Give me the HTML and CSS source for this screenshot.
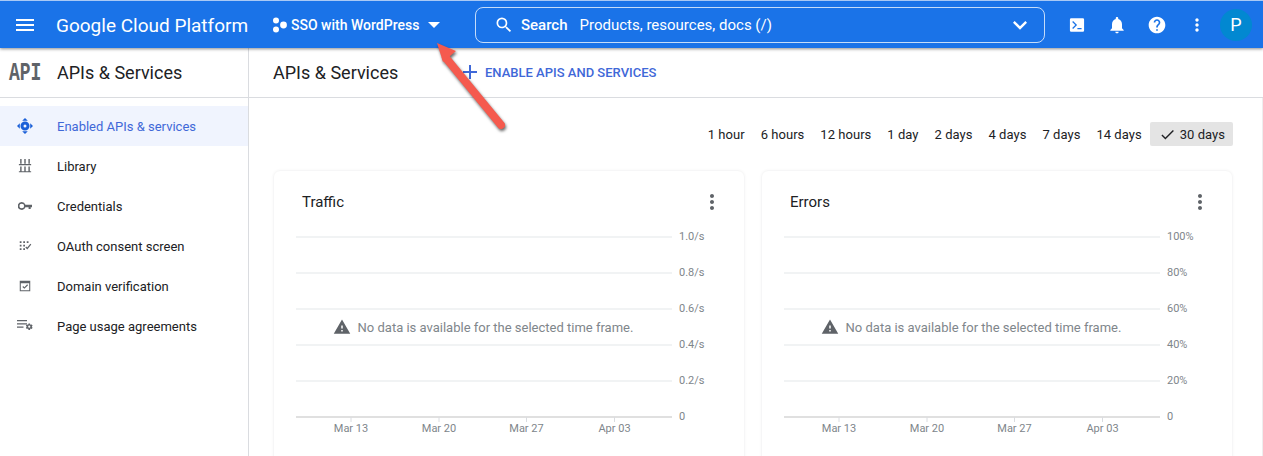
FILE: index.html
```html
<!DOCTYPE html>
<html lang="en">
<head>
    <meta charset="UTF-8">
    <meta name="viewport" content="width=device-width, initial-scale=1.0">
    <title>APIs &amp; Services</title>
    <link rel="stylesheet" href="styles.css">
</head>
<body>

    <header class="topbar">
        <svg class="menu-icon" viewBox="0 0 24 24"><path d="M3 18h18v-2H3v2zm0-5h18v-2H3v2zm0-7v2h18V6H3z"/></svg>
        <div class="logo">Google Cloud Platform</div>
        <div class="project">
            <svg class="project-icon" viewBox="0 0 16 16"><circle cx="4" cy="3.5" r="3"/><circle cx="4" cy="12.5" r="3"/><circle cx="11.5" cy="8" r="3.4"/></svg>
            <span class="project-name">SSO with WordPress</span>
            <svg class="project-caret" viewBox="0 0 12 6"><path d="M0 0h12L6 6z"/></svg>
        </div>
        <div class="search">
            <svg class="search-icon" viewBox="0 0 24 24"><path d="M15.5 14h-.79l-.28-.27A6.471 6.471 0 0 0 16 9.5 6.5 6.5 0 1 0 9.5 16c1.61 0 3.09-.59 4.23-1.57l.27.28v.79l5 4.99L20.49 19l-4.99-5zm-6 0C7.01 14 5 11.99 5 9.5S7.01 5 9.5 5 14 7.01 14 9.5 11.99 14 9.5 14z"/></svg>
            <span class="search-label">Search</span>
            <span class="search-hint">Products, resources, docs (/)</span>
            <svg class="search-more" viewBox="0 0 24 24"><path d="M16.59 8.59L12 13.17 7.41 8.59 6 10l6 6 6-6z"/></svg>
        </div>
        <div class="actions">
            <span class="action"><svg viewBox="0 0 24 24"><path fill-rule="evenodd" d="M5 4h14a1.500 1.500 0 0 1 1.500 1.500v13A1.500 1.500 0 0 1 19 20H5a1.500 1.500 0 0 1-1.500-1.500v-13A1.500 1.500 0 0 1 5 4zm1.200 4.300L9.900 12l-3.700 3.700 1.100 1.100 4.800-4.800-4.800-4.800zM12.500 15.500v1.500h5v-1.500z"/></svg></span>
            <span class="action"><svg viewBox="0 0 24 24"><path d="M12 22c1.100 0 2-.9 2-2h-4c0 1.100.9 2 2 2zm6-6v-5c0-3.070-1.630-5.640-4.500-6.320V4c0-.83-.67-1.500-1.500-1.500s-1.500.67-1.500 1.500v.68C7.640 5.360 6 7.920 6 11v5l-2 2v1h16v-1l-2-2z"/></svg></span>
            <span class="action"><svg viewBox="0 0 24 24"><path d="M12 2C6.480 2 2 6.480 2 12s4.480 10 10 10 10-4.480 10-10S17.520 2 12 2zm1 17h-2v-2h2v2zm2.070-7.750l-.9.920C13.450 12.900 13 13.500 13 15h-2v-.5c0-1.100.45-2.100 1.170-2.830l1.240-1.260c.37-.36.59-.86.59-1.410 0-1.100-.9-2-2-2s-2 .9-2 2H8c0-2.210 1.790-4 4-4s4 1.790 4 4c0 .88-.36 1.680-.93 2.250z"/></svg></span>
            <span class="action action-narrow"><svg viewBox="0 0 24 24"><path d="M12 8c1.100 0 2-.9 2-2s-.9-2-2-2-2 .9-2 2 .9 2 2 2zm0 2c-1.100 0-2 .9-2 2s.9 2 2 2 2-.9 2-2-.9-2-2-2zm0 6c-1.100 0-2 .9-2 2s.9 2 2 2 2-.9 2-2-.9-2-2-2z"/></svg></span>
            <span class="avatar">P</span>
        </div>
    </header>

    <div class="layout">
        <aside class="sidebar">
            <div class="sidebar-head">
                <span class="api-mark"><span>API</span></span>
                <span class="sidebar-title">APIs &amp; Services</span>
            </div>
            <nav class="nav">
                <a class="nav-item active">
                    <svg class="nav-icon" viewBox="0 0 16 16"><path d="M8 0l2.800 2.800H5.200zM8 16l-2.800-2.800h5.600zM0 8l2.800-2.800v5.600zM16 8l-2.800 2.800V5.200z"/><path fill-rule="evenodd" d="M8 3.500A4.500 4.500 0 1 1 8 12.500 4.500 4.500 0 0 1 8 3.500zm0 3a1.500 1.500 0 1 0 0 3 1.500 1.500 0 0 0 0-3z"/></svg>
                    Enabled APIs &amp; services
                </a>
                <a class="nav-item">
                    <svg class="nav-icon" viewBox="0 0 16 16"><path d="M2.500 0h1.600v5.500H2.500zM7.200 0h1.600v5.500H7.200zM11.900 0h1.600v5.500h-1.600zM1 5.800h14v1.200H1zM2.500 8.500h1.600v5.500H2.500zM7.200 8.500h1.600v5.500H7.200zM11.900 8.500h1.600v5.500h-1.600zM1 14h14v1.200H1z"/></svg>
                    Library
                </a>
                <a class="nav-item">
                    <svg class="nav-icon" viewBox="0 0 16 16"><path fill-rule="evenodd" d="M4.300 3.500A4.500 4.500 0 0 1 8.500 6.500H16v3h-1.500v1.800h-2.400V9.500H8.500a4.500 4.500 0 1 1-4.200-6zm0 1.800a2.700 2.700 0 1 0 0 5.400 2.700 2.700 0 0 0 0-5.400z"/></svg>
                    Credentials
                </a>
                <a class="nav-item">
                    <svg class="nav-icon" viewBox="0 0 16 16"><path d="M2 2.500h2v2H2zM6 2.500h2v2H6zM10 2.500h2v2h-2zM2 6.500h2v2H2zM6 6.500h2v2H6zM2 10.500h2v2H2zM6 10.500h2v2H6zM9.500 10.800l-1.100-1.100 1-1 1.100 1.100 3.600-4.300 1.100.9-4.600 5.500z"/></svg>
                    OAuth consent screen
                </a>
                <a class="nav-item">
                    <svg class="nav-icon" viewBox="0 0 16 16"><path fill-rule="evenodd" d="M2 2h12v12H2zm1.200 2.800v8h9.600v-8zM5 9l1-1 1.300 1.300L10.500 6l1 1-4.200 4.200z"/></svg>
                    Domain verification
                </a>
                <a class="nav-item">
                    <svg class="nav-icon nav-icon-wide" viewBox="0 0 16 12"><path d="M0 0h10v1.300H0zM0 3.200h10v1.300H0zM0 6.400h6.500v1.300H0z"/><path fill-rule="evenodd" d="M13 3.500l.4 1.300 1.300-.4.900 1.200-.8 1.100.8 1.100-.9 1.200-1.300-.4-.4 1.300h-1.500l-.4-1.300-1.300.4-.9-1.200.8-1.100-.8-1.100.9-1.200 1.300.4.4-1.300zm-.75 2.100a1.100 1.100 0 1 0 0 2.200 1.100 1.100 0 0 0 0-2.200z"/></svg>
                    Page usage agreements
                </a>
            </nav>
        </aside>

        <main class="main">
            <div class="main-head">
                <h1 class="main-title">APIs &amp; Services</h1>
                <a class="enable-btn">
                    <svg class="enable-icon" viewBox="0 0 14 14"><path d="M6 0h2v6h6v2H8v6H6V8H0V6h6z"/></svg>
                    ENABLE APIS AND SERVICES
                </a>
            </div>

            <div class="content">
                <div class="ranges">
                    <span class="range">1 hour</span>
                    <span class="range">6 hours</span>
                    <span class="range">12 hours</span>
                    <span class="range">1 day</span>
                    <span class="range">2 days</span>
                    <span class="range">4 days</span>
                    <span class="range">7 days</span>
                    <span class="range">14 days</span>
                    <span class="range selected">
                        <svg class="check-icon" viewBox="0 0 24 24"><path d="M9 16.170L4.830 12l-1.410 1.410L9 19 21 7l-1.410-1.410z"/></svg>
                        30 days
                    </span>
                </div>

                <div class="cards">
                    <section class="card">
                        <div class="card-head">
                            <h2 class="card-title">Traffic</h2>
                            <svg class="card-more" viewBox="0 0 24 24"><path d="M12 8c1.100 0 2-.9 2-2s-.9-2-2-2-2 .9-2 2 .9 2 2 2zm0 2c-1.100 0-2 .9-2 2s.9 2 2 2 2-.9 2-2-.9-2-2-2zm0 6c-1.100 0-2 .9-2 2s.9 2 2 2 2-.9 2-2-.9-2-2-2z"/></svg>
                        </div>
                        <div class="chart">
                            <svg class="plot" viewBox="0 0 470 230">
                                <g class="grid">
                                    <line x1="22" x2="398" y1="11" y2="11"/>
                                    <line x1="22" x2="398" y1="47" y2="47"/>
                                    <line x1="22" x2="398" y1="83" y2="83"/>
                                    <line x1="22" x2="398" y1="119" y2="119"/>
                                    <line x1="22" x2="398" y1="155" y2="155"/>
                                </g>
                                <line class="axis" x1="22" x2="398" y1="191" y2="191"/>
                                <g class="ticks">
                                    <line x1="77" x2="77" y1="191" y2="196"/>
                                    <line x1="165" x2="165" y1="191" y2="196"/>
                                    <line x1="252.500" x2="252.500" y1="191" y2="196"/>
                                    <line x1="340.500" x2="340.500" y1="191" y2="196"/>
                                </g>
                                <g class="y-labels">
                                    <text x="405" y="14">1.0/s</text>
                                    <text x="405" y="50">0.8/s</text>
                                    <text x="405" y="86">0.6/s</text>
                                    <text x="405" y="122">0.4/s</text>
                                    <text x="405" y="158">0.2/s</text>
                                    <text x="405" y="194">0</text>
                                </g>
                                <g class="x-labels">
                                    <text x="77" y="206">Mar 13</text>
                                    <text x="165" y="206">Mar 20</text>
                                    <text x="252.500" y="206">Mar 27</text>
                                    <text x="340.500" y="206">Apr 03</text>
                                </g>
                            </svg>
                            <div class="no-data">
                                <svg class="warn-icon" viewBox="0 0 24 24"><path d="M1 21h22L12 2 1 21zm12-3h-2v-2h2v2zm0-4h-2v-4h2v4z"/></svg>
                                No data is available for the selected time frame.
                            </div>
                        </div>
                    </section>

                    <section class="card">
                        <div class="card-head">
                            <h2 class="card-title">Errors</h2>
                            <svg class="card-more" viewBox="0 0 24 24"><path d="M12 8c1.100 0 2-.9 2-2s-.9-2-2-2-2 .9-2 2 .9 2 2 2zm0 2c-1.100 0-2 .9-2 2s.9 2 2 2 2-.9 2-2-.9-2-2-2zm0 6c-1.100 0-2 .9-2 2s.9 2 2 2 2-.9 2-2-.9-2-2-2z"/></svg>
                        </div>
                        <div class="chart">
                            <svg class="plot" viewBox="0 0 470 230">
                                <g class="grid">
                                    <line x1="22" x2="398" y1="11" y2="11"/>
                                    <line x1="22" x2="398" y1="47" y2="47"/>
                                    <line x1="22" x2="398" y1="83" y2="83"/>
                                    <line x1="22" x2="398" y1="119" y2="119"/>
                                    <line x1="22" x2="398" y1="155" y2="155"/>
                                </g>
                                <line class="axis" x1="22" x2="398" y1="191" y2="191"/>
                                <g class="ticks">
                                    <line x1="77" x2="77" y1="191" y2="196"/>
                                    <line x1="165" x2="165" y1="191" y2="196"/>
                                    <line x1="252.500" x2="252.500" y1="191" y2="196"/>
                                    <line x1="340.500" x2="340.500" y1="191" y2="196"/>
                                </g>
                                <g class="y-labels">
                                    <text x="405" y="14">100%</text>
                                    <text x="405" y="50">80%</text>
                                    <text x="405" y="86">60%</text>
                                    <text x="405" y="122">40%</text>
                                    <text x="405" y="158">20%</text>
                                    <text x="405" y="194">0</text>
                                </g>
                                <g class="x-labels">
                                    <text x="77" y="206">Mar 13</text>
                                    <text x="165" y="206">Mar 20</text>
                                    <text x="252.500" y="206">Mar 27</text>
                                    <text x="340.500" y="206">Apr 03</text>
                                </g>
                            </svg>
                            <div class="no-data">
                                <svg class="warn-icon" viewBox="0 0 24 24"><path d="M1 21h22L12 2 1 21zm12-3h-2v-2h2v2zm0-4h-2v-4h2v4z"/></svg>
                                No data is available for the selected time frame.
                            </div>
                        </div>
                    </section>
                </div>
            </div>
        </main>
    </div>

    <!-- Red annotation arrow drawn over the page -->
    <svg class="callout" viewBox="0 0 90 100">
        <path class="callout-line" d="M16 18L71 85"/>
        <path class="callout-head" d="M7 3L26 11 13 22z"/>
    </svg>

</body>
</html>
```

FILE: styles.css
```css
* {
    box-sizing: border-box;
}

html, body {
    height: 456px;
    overflow: hidden;
}

body {
    margin: 0;
    font-family: Roboto, "Liberation Sans", sans-serif;
    font-size: 13px;
    color: #202124;
    background-color: #ffffff;
}

/* Top bar */
.topbar {
    display: flex;
    align-items: center;
    height: 48px;
    padding: 1px 0 0 13px;
    border-top: 1px solid #a9c9f5;
    background-color: #1a73e8;
    color: #ffffff;
    box-shadow: 0 1px 3px rgba(0, 0, 0, 0.45);
    position: relative;
    z-index: 1;
}

.topbar svg {
    fill: #ffffff;
    flex: none;
}

.menu-icon {
    width: 24px;
    height: 24px;
    margin-right: 19px;
}

.logo {
    width: 216px;
    font-size: 19px;
    white-space: nowrap;
}

.project {
    display: flex;
    align-items: center;
    width: 203px;
}

.project-icon {
    width: 16px;
    height: 16px;
    margin-right: 3px;
}

.project-name {
    font-size: 14px;
    font-weight: 500;
    white-space: nowrap;
}

.project-caret {
    width: 12px;
    height: 6px;
    margin-left: 9px;
}

.search {
    display: flex;
    align-items: center;
    width: 570px;
    height: 36px;
    padding: 0 10px 0 18px;
    border: 1px solid rgba(255, 255, 255, 0.75);
    border-radius: 8px;
    font-size: 15px;
}

.search-icon {
    width: 20px;
    height: 20px;
    margin-right: 7px;
}

.search-label {
    font-weight: 500;
    margin-right: 12px;
}

.search-more {
    width: 28px;
    height: 28px;
    margin-left: auto;
}

.actions {
    display: flex;
    align-items: center;
    margin-left: 12px;
}

.action {
    display: flex;
    justify-content: center;
    width: 40px;
}

.action-narrow {
    width: 39px;
}

.action svg {
    width: 20px;
    height: 20px;
}

.avatar {
    width: 32px;
    height: 32px;
    margin-left: 4px;
    border-radius: 50%;
    background-color: #0288d1;
    font-size: 18px;
    line-height: 32px;
    text-align: center;
}

/* Page body */
.layout {
    display: flex;
    height: 408px;
}

.sidebar {
    flex: none;
    width: 249px;
    border-right: 1px solid #dadce0;
}

.sidebar-head {
    display: flex;
    align-items: center;
    height: 50px;
    padding: 0 0 1px 9px;
    border-bottom: 1px solid #dadce0;
}

.api-mark {
    width: 32px;
    margin-right: 16px;
    color: #5f6368;
    font-family: "Liberation Mono", monospace;
    font-size: 25px;
    font-weight: 700;
    line-height: 28px;
}

.api-mark span {
    display: inline-block;
    transform: translateY(2px) scaleX(0.72);
    transform-origin: left center;
}

.sidebar-title {
    font-size: 18px;
}

.nav {
    padding-top: 8px;
}

.nav-item {
    display: flex;
    align-items: center;
    height: 40px;
    padding-left: 18px;
    font-size: 13px;
}

.nav-icon {
    flex: none;
    width: 14px;
    height: 14px;
    margin-right: 25px;
    fill: #5f6368;
}

.nav-item.active {
    background-color: #f0f4fe;
    color: #3f68d8;
}

.nav-item.active .nav-icon {
    width: 16px;
    height: 16px;
    margin: 0 24px 0 -1px;
    fill: #1a5fd8;
}

.nav-icon-wide {
    width: 16px;
    height: 12px;
    margin: 0 24px 0 -1px;
}

.main {
    flex: 1;
    min-width: 0;
}

.main-head {
    display: flex;
    align-items: center;
    height: 50px;
    padding: 0 0 1px 24px;
    border-bottom: 1px solid #dadce0;
}

.main-title {
    width: 190px;
    margin: 0;
    font-size: 18px;
    font-weight: 400;
}

.enable-btn {
    display: flex;
    align-items: center;
    color: #3f68d8;
    font-size: 13px;
    font-weight: 500;
}

.enable-icon {
    width: 14px;
    height: 14px;
    margin-right: 8px;
    fill: #3f68d8;
}

.content {
    padding: 24px 29px 0 25px;
    border-right: 1px solid #eeeeee;
}

.ranges {
    display: flex;
    justify-content: flex-end;
    height: 24px;
    margin-bottom: 25px;
}

.range {
    display: flex;
    align-items: center;
    padding: 0 8px;
    font-size: 13px;
    letter-spacing: 0.04px;
    white-space: nowrap;
}

.range.selected {
    background-color: #e4e4e4;
    border-radius: 2px;
}

.check-icon {
    width: 17px;
    height: 17px;
    margin: 0 4px 0 1px;
    fill: #202124;
}

.cards {
    display: flex;
    gap: 18px;
}

.card {
    flex: none;
    width: 470px;
    height: 300px;
    border-radius: 6px;
    box-shadow: 0 0 3px rgba(60, 64, 67, 0.13);
}

.card-head {
    display: flex;
    align-items: center;
    justify-content: space-between;
    height: 55px;
    padding: 7px 20px 0 28px;
}

.card-title {
    margin: 0;
    font-size: 15px;
    font-weight: 400;
}

.card-more {
    width: 24px;
    height: 24px;
    fill: #5f6368;
}

.chart {
    position: relative;
}

.plot {
    display: block;
    width: 470px;
    height: 230px;
}

.grid line {
    stroke: #f1f3f4;
    stroke-width: 2;
}

.axis {
    stroke: #e0e0e0;
    stroke-width: 2;
}

.ticks line {
    stroke: #dadce0;
    stroke-width: 1;
}

.y-labels text,
.x-labels text {
    fill: #80868b;
    font-size: 11px;
}

.x-labels text {
    text-anchor: middle;
}

/* Message lies over the plot area */
.no-data {
    position: absolute;
    left: 21px;
    top: 91px;
    display: flex;
    align-items: center;
    justify-content: center;
    width: 376px;
    height: 20px;
    color: #80868b;
    font-size: 13px;
}

.warn-icon {
    width: 18px;
    height: 18px;
    margin-right: 7px;
    fill: #5f6368;
}

.callout {
    position: absolute;
    left: 430px;
    top: 40px;
    width: 90px;
    height: 100px;
    overflow: visible;
    z-index: 2;
    filter: drop-shadow(1px 2px 1.5px rgba(0, 0, 0, 0.6));
}

.callout-line {
    fill: none;
    stroke: #f55a4e;
    stroke-width: 8;
    stroke-linecap: round;
}

.callout-head {
    fill: #f55a4e;
}
```
